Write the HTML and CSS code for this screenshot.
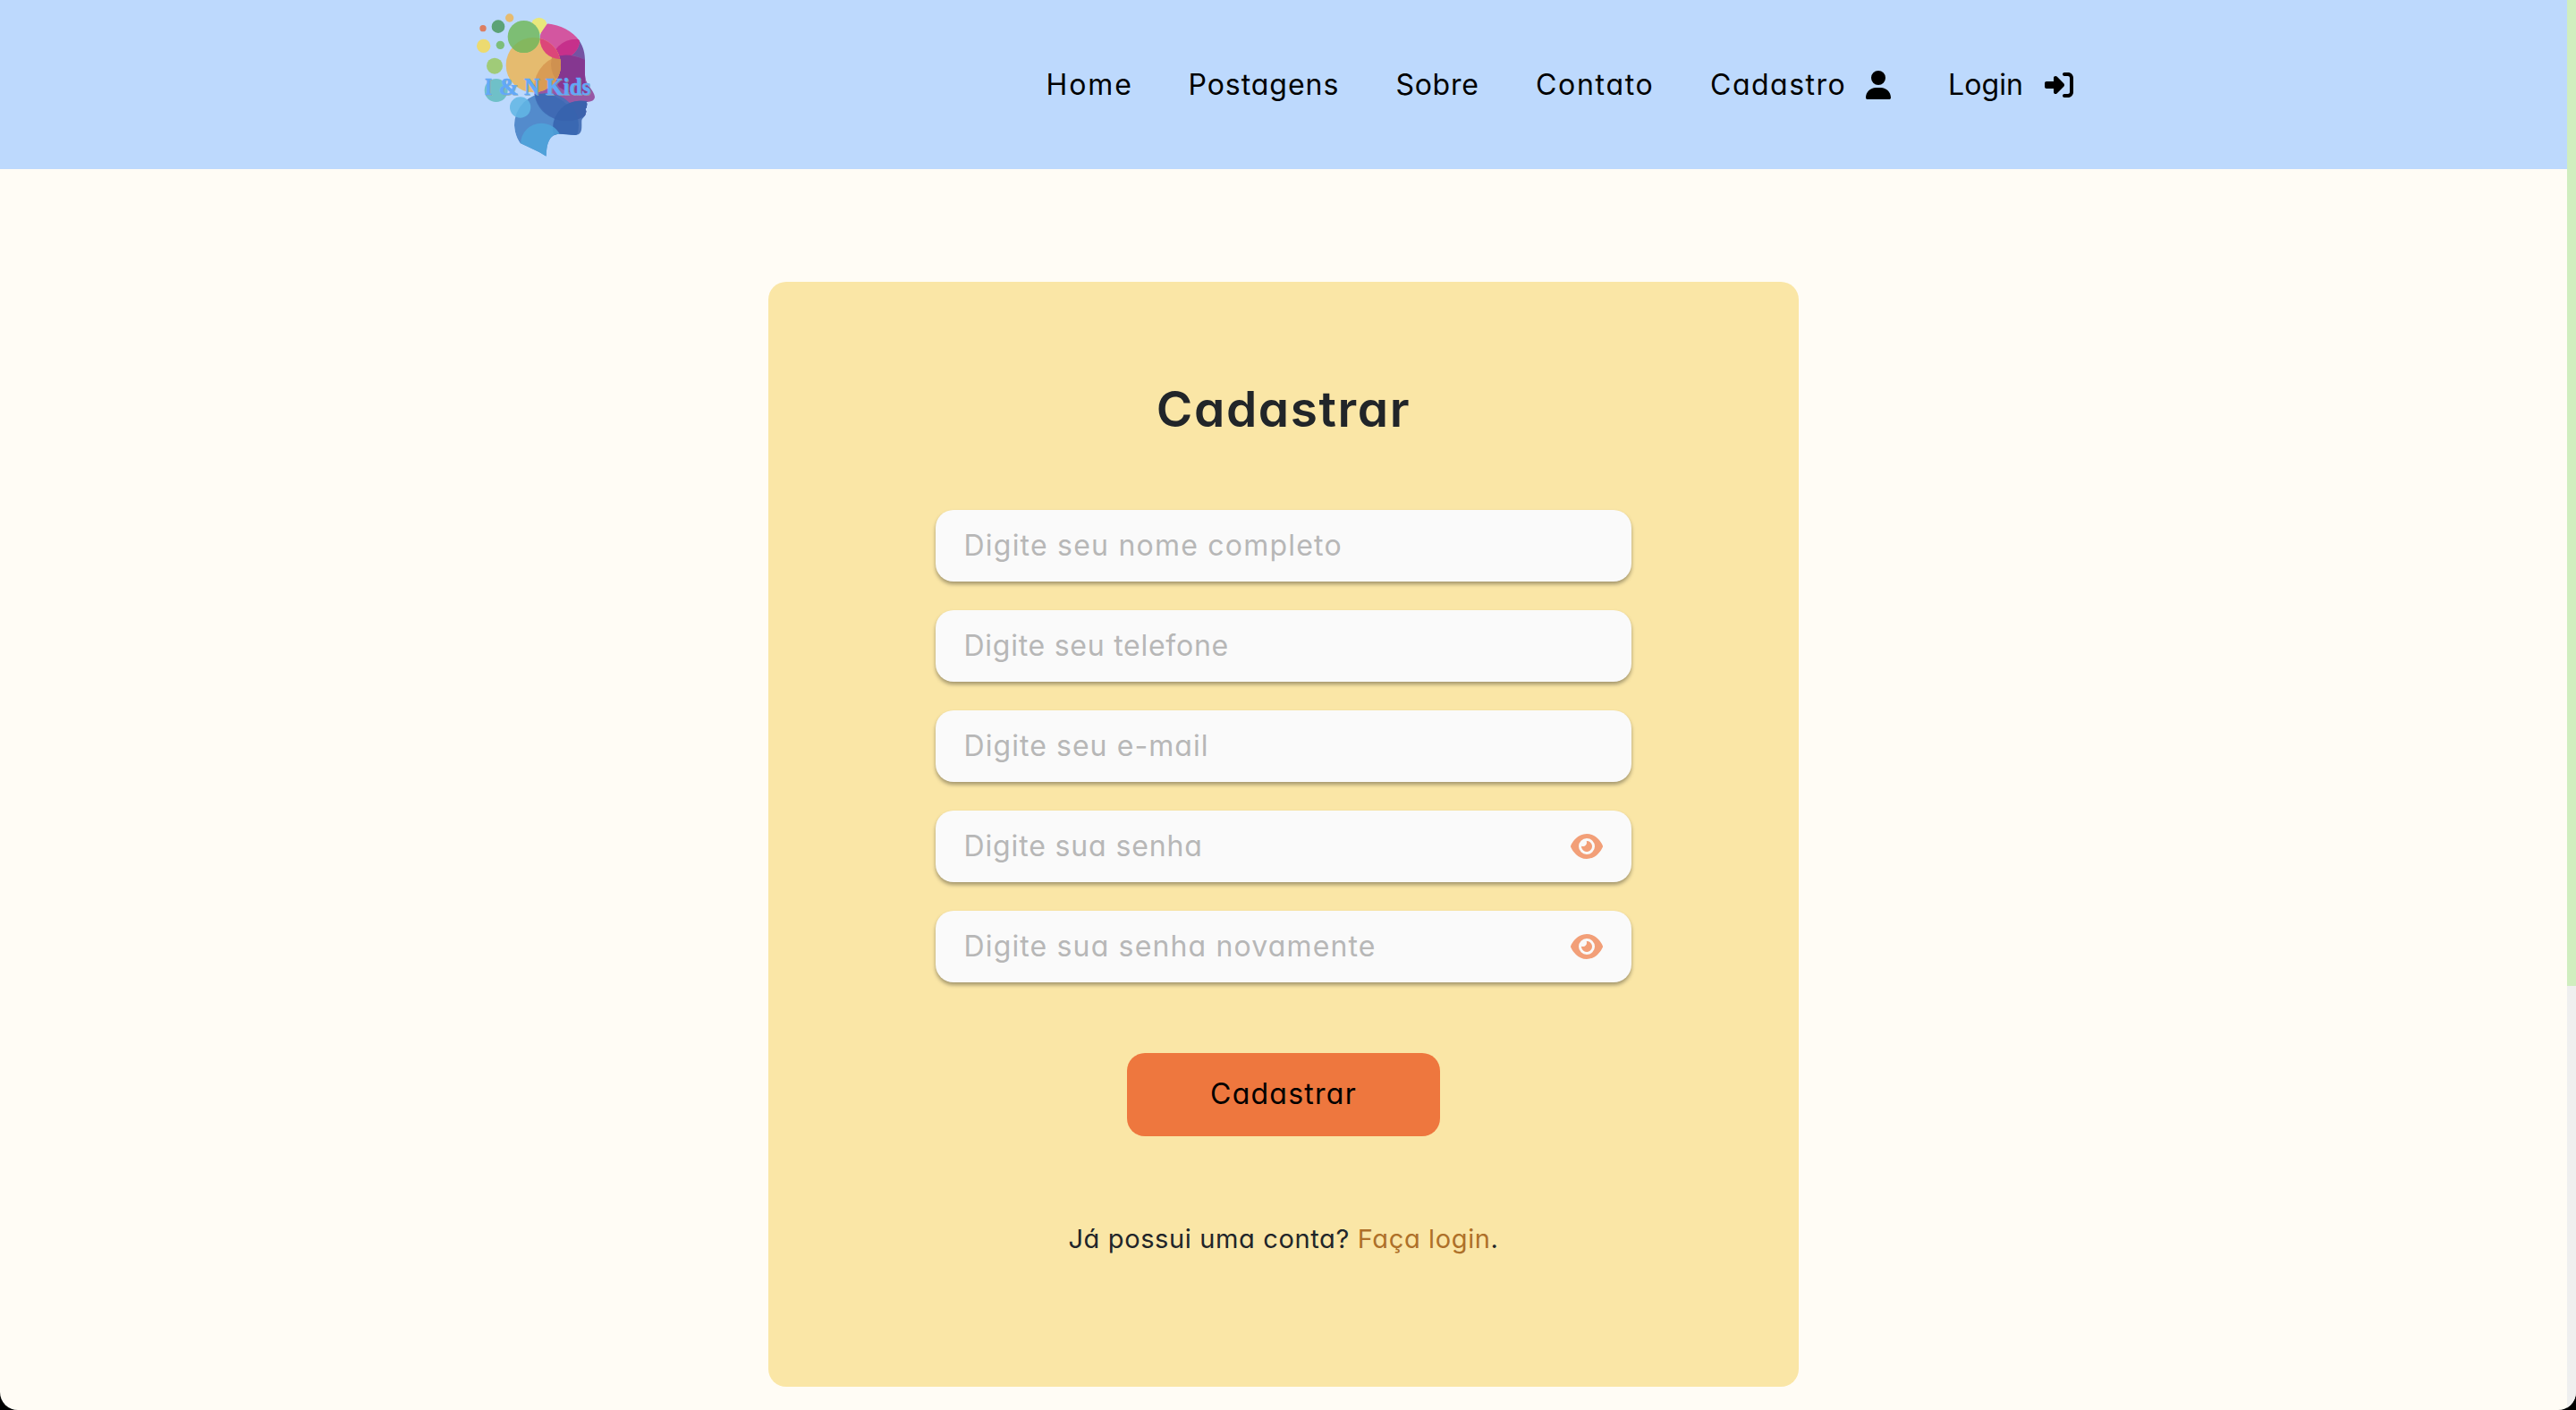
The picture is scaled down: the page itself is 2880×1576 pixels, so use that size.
FILE: index.html
```html
<!DOCTYPE html>
<html lang="pt-BR">
<head>
<meta charset="utf-8">
<title>I &amp; N Kids - Cadastro</title>
<link rel="stylesheet" href="styles.css">
</head>
<body>
<div class="window">
  <div class="page">
    <header class="header">
      <a class="logo" aria-label="I &amp; N Kids">
        <svg viewBox="0 0 540 567" width="180" height="189">
          <defs>
            <clipPath id="head"><path d="M306 79C350 84 392 106 412 135C428 160 433 180 432 215C431 260 432 268 443 285C455 302 465 315 465 326C463 340 446 341 436 342C443 350 436 356 438 361C429 366 440 372 435 378C434 392 422 396 421 404C420 425 426 452 400 453C370 453 350 446 330 452C310 462 303 485 302 524C275 506 245 495 215 480C180 430 190 350 250 320L250 160Z"/></clipPath>
            <clipPath id="orange"><circle cx="259" cy="218" r="92"/></clipPath>
            <clipPath id="pink"><circle cx="348" cy="131" r="67"/></clipPath>
          </defs>
          <circle cx="90" cy="95" r="11" fill="#dc7e62"/>
          <circle cx="141" cy="89" r="22" fill="#5ca276"/>
          <circle cx="179" cy="60" r="14" fill="#e6bb70"/>
          <circle cx="92" cy="154" r="23" fill="#ecda70"/>
          <circle cx="148" cy="151" r="14" fill="#7dbe7a"/>
          <circle cx="129" cy="221" r="27" fill="#a0cb78"/>
          <circle cx="134" cy="303" r="39" fill="#6fc0c8"/>
          <circle cx="278" cy="86" r="27" fill="#e9e87c"/>
          <g clip-path="url(#head)">
            <circle cx="402" cy="215" r="84" fill="#7453a2"/>
            <circle cx="372" cy="295" r="111" fill="#9757a4"/>
            <circle cx="348" cy="131" r="67" fill="#d356a0"/>
            <g clip-path="url(#pink)"><circle cx="402" cy="215" r="84" fill="#c6308b"/></g>
          </g>
          <g clip-path="url(#head)">
            <path d="M327 194Q372 172 432 201V272Q448 294 452 306Q400 330 345 292Q318 250 320 201Q340 199 348 198Z" fill="#853790"/>
          </g>
          <circle cx="259" cy="218" r="92" fill="#e5bb6f"/>
          <g clip-path="url(#orange)">
            <circle cx="372" cy="295" r="111" fill="#d99c55"/>
            <circle cx="402" cy="215" r="84" fill="#cf9150"/>
            <circle cx="348" cy="131" r="67" fill="#dc4679"/>
          </g>
          <circle cx="227" cy="123" r="54" fill="#7dbe74"/>
          <g clip-path="url(#orange)"><circle cx="227" cy="123" r="54" fill="#84b75e"/></g>
          <g clip-path="url(#head)">
            <circle cx="303" cy="420" r="108" fill="#3474be" opacity=".78"/>
            <path d="M262 315Q274 385 345 403Q405 412 440 382V339Q405 334 372 350Q330 310 262 315Z" fill="#3c6ab3" opacity=".75"/>
            <circle cx="416" cy="430" r="92" fill="#3662ad" opacity=".85"/>
            <circle cx="286" cy="483" r="70" fill="#4fa4da" opacity=".85"/>
          </g>
          <circle cx="215" cy="360" r="35" fill="#62b7e5" opacity=".87"/>
          <text class="logo-shade" y="321"><tspan x="99" textLength="24" lengthAdjust="spacingAndGlyphs">I</tspan><tspan x="146" textLength="66" lengthAdjust="spacingAndGlyphs">&amp;</tspan><tspan x="231" textLength="52" lengthAdjust="spacingAndGlyphs">N</tspan><tspan x="303" textLength="151" lengthAdjust="spacingAndGlyphs">Kids</tspan></text>
          <text class="logo-text" y="318"><tspan x="96" textLength="24" lengthAdjust="spacingAndGlyphs">I</tspan><tspan x="143" textLength="66" lengthAdjust="spacingAndGlyphs">&amp;</tspan><tspan x="228" textLength="52" lengthAdjust="spacingAndGlyphs">N</tspan><tspan x="300" textLength="151" lengthAdjust="spacingAndGlyphs">Kids</tspan></text>
        </svg>
      </a>
      <nav class="nav">
        <a class="link home">Home</a>
        <a class="link posts">Postagens</a>
        <a class="link about">Sobre</a>
        <a class="link contact">Contato</a>
        <a class="link register">Cadastro
          <svg viewBox="0 0 448 512" width="28" height="32"><path d="M224 256A128 128 0 1 0 224 0a128 128 0 1 0 0 256zm-45.7 48C79.8 304 0 383.8 0 482.3C0 498.7 13.3 512 29.7 512H418.3c16.4 0 29.7-13.3 29.7-29.7C448 383.8 368.2 304 269.7 304H178.3z"/></svg>
        </a>
        <a class="link login">Login
          <svg viewBox="0 0 512 512" width="32" height="32"><path d="M217.9 105.9L340.7 228.7c7.2 7.2 11.3 17.1 11.3 27.3s-4.1 20.1-11.3 27.3L217.9 406.1c-6.4 6.4-15 9.9-24 9.9c-18.7 0-33.9-15.2-33.9-33.9l0-62.1L32 320c-17.7 0-32-14.3-32-32l0-64c0-17.7 14.3-32 32-32l128 0 0-62.1c0-18.7 15.2-33.9 33.9-33.9c9 0 17.6 3.6 24 9.9zM352 416l64 0c17.7 0 32-14.3 32-32l0-256c0-17.7-14.3-32-32-32l-64 0c-17.7 0-32-14.3-32-32s14.3-32 32-32l64 0c53 0 96 43 96 96l0 256c0 53-43 96-96 96l-64 0c-17.7 0-32-14.3-32-32s14.3-32 32-32z"/></svg>
        </a>
      </nav>
    </header>
    <main class="card">
      <h1 class="title">Cadastrar</h1>
      <form class="form">
        <label class="field name"><input type="text" placeholder="Digite seu nome completo"></label>
        <label class="field phone"><input type="text" placeholder="Digite seu telefone"></label>
        <label class="field email"><input type="text" placeholder="Digite seu e-mail"></label>
        <label class="field password"><input type="password" placeholder="Digite sua senha">
          <svg class="eye" viewBox="0 0 576 512" width="36" height="32"><path d="M288 32c-80.8 0-145.5 36.8-192.6 80.6C48.6 156 17.3 208 2.5 243.7c-3.3 7.9-3.3 16.7 0 24.6C17.3 304 48.6 356 95.4 399.4C142.5 443.2 207.2 480 288 480s145.5-36.8 192.6-80.6c46.8-43.5 78.1-95.4 93-131.1c3.3-7.9 3.3-16.7 0-24.6c-14.9-35.7-46.2-87.7-93-131.1C433.5 68.8 368.8 32 288 32zM144 256a144 144 0 1 1 288 0 144 144 0 1 1 -288 0zm144-64c0 35.3-28.7 64-64 64c-7.1 0-13.9-1.2-20.3-3.3c-5.5-1.8-11.9 1.6-11.7 7.4c.3 6.9 1.3 13.8 3.2 20.7c13.7 51.2 66.4 81.6 117.6 67.9s81.6-66.4 67.9-117.6c-11.1-41.5-47.8-69.4-88.6-71.1c-5.8-.2-9.2 6.1-7.4 11.7c2.1 6.4 3.3 13.2 3.3 20.3z"/></svg>
        </label>
        <label class="field repeat"><input type="password" placeholder="Digite sua senha novamente">
          <svg class="eye" viewBox="0 0 576 512" width="36" height="32"><path d="M288 32c-80.8 0-145.5 36.8-192.6 80.6C48.6 156 17.3 208 2.5 243.7c-3.3 7.9-3.3 16.7 0 24.6C17.3 304 48.6 356 95.4 399.4C142.5 443.2 207.2 480 288 480s145.5-36.8 192.6-80.6c46.8-43.5 78.1-95.4 93-131.1c3.3-7.9 3.3-16.7 0-24.6c-14.9-35.7-46.2-87.7-93-131.1C433.5 68.8 368.8 32 288 32zM144 256a144 144 0 1 1 288 0 144 144 0 1 1 -288 0zm144-64c0 35.3-28.7 64-64 64c-7.1 0-13.9-1.2-20.3-3.3c-5.5-1.8-11.9 1.6-11.7 7.4c.3 6.9 1.3 13.8 3.2 20.7c13.7 51.2 66.4 81.6 117.6 67.9s81.6-66.4 67.9-117.6c-11.1-41.5-47.8-69.4-88.6-71.1c-5.8-.2-9.2 6.1-7.4 11.7c2.1 6.4 3.3 13.2 3.3 20.3z"/></svg>
        </label>
      </form>
      <button class="submit" type="button">Cadastrar</button>
      <p class="signin">Já possui uma conta? <a class="signin-link">Faça login</a>.</p>
    </main>
  </div>
  <div class="scrollbar"><div class="thumb"></div></div>
</div>
</body>
</html>
```
FILE: styles.css
```css
* { box-sizing: border-box; }
html { background: #000; }
body {
  margin: 0;
  height: 1576px;
  overflow: hidden;
  font-family: Inter, "Open Sans", sans-serif;
  font-feature-settings: "cv11";
  font-size: 32px;
  font-weight: 430;
  color: #212529;
}
.window {
  display: flex;
  height: 1576px;
  border-radius: 0 0 20px 20px;
  overflow: hidden;
  background: #fffcf5;
}
.page { flex: 1; display: flex; flex-direction: column; align-items: center; }
.scrollbar { width: 10px; background: #efefef; }
.thumb { height: 1102px; background: #d0eebf; }

.header {
  align-self: stretch;
  display: flex;
  justify-content: space-between;
  height: 189px;
  padding: 0 552px 0 510px;
  background: #bdd9fd;
}
.logo, .logo svg { display: block; }
.logo-text, .logo-shade {
  font-family: "Liberation Serif", serif;
  font-weight: 700;
  font-size: 80px;
  fill: #62a8f8;
}
.logo-text { stroke: #62a8f8; stroke-width: 1.5px; }
.logo-shade { fill: #9bab9c; opacity: .7; }

.nav { display: flex; align-items: center; gap: 64px; color: #000; }
.link {
  display: flex;
  align-items: center;
  justify-content: space-between;
  line-height: 48px;
  white-space: nowrap;
}
.home { width: 95px; letter-spacing: 1.9px; }
.posts { width: 168px; letter-spacing: .95px; }
.about { width: 92.5px; letter-spacing: .7px; }
.contact { width: 131px; letter-spacing: 1.7px; }
.register { width: 202px; letter-spacing: 1.5px; }
.login { width: 140px; letter-spacing: .1px; }

.card {
  display: flex;
  flex-direction: column;
  align-items: center;
  width: 1152px;
  height: 1235px;
  margin-top: 126px;
  padding-top: 109px;
  border-radius: 20px;
  background: #fae6a6;
}
.title {
  margin: 0 0 80px;
  font-size: 55px;
  font-weight: 570;
  line-height: 66px;
  letter-spacing: 1.6px;
}
.form { display: flex; flex-direction: column; gap: 32px; width: 778px; }
.field {
  display: flex;
  align-items: center;
  height: 80px;
  padding: 0 32px 0 31.5px;
  border-radius: 20px;
  background: #fafafa;
  box-shadow: 0 3px 4px rgba(0, 0, 0, .34);
}
.field input {
  flex: 1;
  min-width: 0;
  height: 48px;
  margin-bottom: 2px;
  padding: 0;
  border: 0;
  outline: 0;
  background: none;
  font: inherit;
  font-feature-settings: inherit;
  letter-spacing: inherit;
}
.field input::placeholder { color: #b7b7b7; opacity: 1; }
.name { letter-spacing: 1.22px; }
.phone { letter-spacing: .74px; }
.email { letter-spacing: 1.06px; }
.password { letter-spacing: .86px; }
.repeat { letter-spacing: 1.15px; }
.eye { fill: #f29f78; }

.submit {
  width: 350px;
  height: 93px;
  margin: 79px 0 0;
  padding: 0 0 2px;
  border: 0;
  border-radius: 20px;
  background: #ee773e;
  color: #000;
  font: inherit;
  font-feature-settings: inherit;
  letter-spacing: 1.25px;
}
.signin {
  margin: 93px 0 0;
  font-size: 29px;
  line-height: 44px;
  letter-spacing: .63px;
}
.signin-link { color: #ae7029; }
```
